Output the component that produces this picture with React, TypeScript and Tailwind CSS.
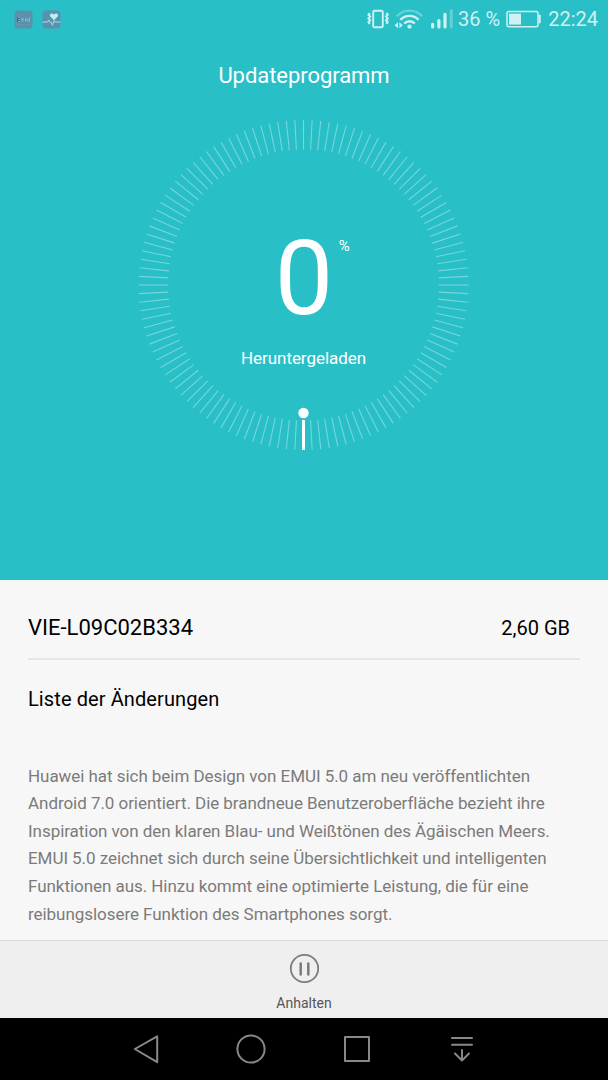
import type { ReactNode } from "react";

const TICKS = Array.from({ length: 120 }, (_, i) => i * 3);

function StatusBar() {
  return (
    <header className="flex h-[38px] items-center justify-between pl-[14px] pr-[10px] text-[#d0f1f3]">
      <div className="flex items-center gap-[9px]">
        <svg width="19" height="19" viewBox="0 0 19 19">
          <rect x="0.5" y="0.5" width="18" height="18" rx="3.5" fill="#5b91ad" />
          <rect x="3" y="7" width="3" height="5" fill="#3d6a84" />
          <path d="M4 7.5h2M4 9.5h2M4 11.5h2M7.5 8l1 3.5 1-3.5M11.5 11.5v-3l2.5 3v-3M15.5 7.5v4" stroke="#94bfd1" strokeWidth="0.8" fill="none" />
          <path d="M3 14.5h13" stroke="#7ba8bf" strokeWidth="0.8" strokeDasharray="1 2" />
        </svg>
        <svg width="19" height="19" viewBox="0 0 19 19">
          <rect x="0.5" y="0.5" width="18" height="18" rx="3.5" fill="#5b91ad" />
          <path d="M12 10.2 8.6 6.8C6.6 4.5 9.8 1.9 12 4.4c2.2-2.5 5.4.1 3.4 2.4z" fill="#b9f0f3" />
          <path d="M0.5 12h5l1.2-2 1.3 2.3 1.2 0 1.2 3 1.7-4.8 1 1.5h5.4" stroke="#a9dde4" strokeWidth="1" fill="none" />
        </svg>
      </div>
      <div className="flex items-center">
        <svg width="86" height="22" viewBox="0 0 86 22" fill="none" stroke="currentColor">
          <rect x="6.2" y="2.7" width="9.6" height="16.6" rx="1.4" strokeWidth="1.9" />
          <path d="M2.7 5l-1.2 1.8 1.6 1.8-1.6 1.8 1.6 1.8-1.6 1.8 1.2 1.8M19.3 5l1.4 1.8-1.6 1.8 1.6 1.8-1.6 1.8 1.6 1.8-1.4 1.8" strokeWidth="2.1" />
          <path d="M29.8 8.3a17 17 0 0 1 25.4 0" strokeWidth="2.2" opacity="0.4" />
          <path d="M33.4 11.9a12.3 12.3 0 0 1 18.2 0M37.3 15.5a7 7 0 0 1 10.4 0" strokeWidth="2.4" />
          <circle cx="42.5" cy="18.6" r="2.1" fill="currentColor" stroke="none" />
          <path d="M27.6 17.2l3.4-3v6zM35.8 17.2l-3.4-3v6z" fill="currentColor" stroke="none" />
          <path d="M65.6 18.9v-2.6M71.9 18.9v-6.4M78 18.9V6.3" strokeWidth="3.2" strokeLinecap="round" />
          <path d="M84.3 18.9V2.6" strokeWidth="3" strokeLinecap="round" opacity="0.35" />
        </svg>
        <span className="ml-[5px] text-[20px] leading-none">36 %</span>
        <svg className="ml-[6px]" width="36" height="18" viewBox="0 0 36 18" fill="none" stroke="currentColor">
          <rect x="1" y="1.4" width="31" height="15.4" rx="2" strokeWidth="1.5" />
          <rect x="3" y="3.6" width="12" height="11" fill="currentColor" stroke="none" />
          <path d="M33 5h1.4v8H33z" fill="currentColor" strokeWidth="0.6" />
        </svg>
        <time className="ml-[6px] text-[20px] leading-none">22:24</time>
      </div>
    </header>
  );
}

function ProgressDial() {
  return (
    <div className="relative mt-[30px] flex h-[332px] w-full flex-col items-center">
      <svg className="absolute left-0 top-0" width="608" height="332" viewBox="0 0 608 332">
        <g transform="translate(303.5 166)">
          {TICKS.filter((angle) => angle !== 180).map((angle) => (
            <line key={angle} y1="-165" y2="-135.5" stroke="#fff" strokeOpacity="0.36" strokeWidth="1.1" transform={`rotate(${angle})`} />
          ))}
          <line y1="135" y2="165" stroke="#fff" strokeWidth="3" />
          <circle cy="128" r="5.2" fill="#fff" />
        </g>
      </svg>
      <div className="relative mt-[107px] text-[104px] leading-[105px]">
        0
        <span className="absolute left-[64px] top-[11px] text-[15px] leading-[18px]">%</span>
      </div>
      <p className="mt-[16px] pr-px text-[17px] leading-[22px] tracking-[-0.05px]">Heruntergeladen</p>
    </div>
  );
}

function NavIcon({ children }: { children: ReactNode }) {
  return (
    <svg width="32" height="32" viewBox="0 0 32 32" fill="none" stroke="#888" strokeWidth="2" strokeLinejoin="round" strokeLinecap="round">
      {children}
    </svg>
  );
}

export default function App() {
  return (
    <div className="flex h-[1080px] w-[608px] flex-col overflow-hidden bg-[#f7f7f7] font-['Roboto',sans-serif]">
      <section className="h-[580px] shrink-0 bg-[#29bfc7] text-white">
        <StatusBar />
        <h1 className="mt-[24px] -mb-px text-center text-[22px] leading-[28px] tracking-[-0.05px]">Updateprogramm</h1>
        <ProgressDial />
      </section>
      <main className="h-[360px] shrink-0 overflow-hidden pl-[28px] pr-[28px]">
        <div className="flex h-[80px] w-[552px] items-center justify-between border-b-2 border-[#e6e6e6] pr-[10px] pt-[17px] text-[20px] text-black">
          <span className="text-[22px]">VIE-L09C02B334</span>
          <span>2,60 GB</span>
        </div>
        <h2 className="mt-[25px] text-[20px] leading-[28px] tracking-[0.1px] text-black">Liste der Änderungen</h2>
        <p className="mt-[49.6px] whitespace-nowrap text-[17px] leading-[27.6px] tracking-[-0.05px] text-[#7b7b7b]">
          Huawei hat sich beim Design von EMUI 5.0 am neu veröffentlichten<br />
          Android 7.0 orientiert. Die brandneue Benutzeroberfläche bezieht ihre<br />
          Inspiration von den klaren Blau- und Weißtönen des Ägäischen Meers.<br />
          EMUI 5.0 zeichnet sich durch seine Übersichtlichkeit und intelligenten<br />
          Funktionen aus. Hinzu kommt eine optimierte Leistung, die für eine<br />
          reibungslosere Funktion des Smartphones sorgt.
        </p>
      </main>
      <button className="flex h-[78px] w-full shrink-0 flex-col items-center border-t border-[#dcdcdc] bg-[#efefef] pt-[12px]">
        <svg width="31" height="31" viewBox="0 0 31 31" fill="none" stroke="#7b7b7b">
          <circle cx="15.5" cy="15.5" r="13.7" strokeWidth="1.8" />
          <path d="M11.7 10.5v11M19.3 10.5v11" strokeWidth="2.5" strokeLinecap="round" />
        </svg>
        <span className="mt-[10px] text-[14px] leading-[18px] text-[#555]">Anhalten</span>
      </button>
      <nav className="flex h-[62px] shrink-0 items-center justify-between bg-black pl-[130px] pr-[130px]">
        <NavIcon><path d="M27.2 3.4v25.8L4.8 16z" /></NavIcon>
        <NavIcon><circle cx="16" cy="16" r="13.6" /></NavIcon>
        <NavIcon><rect x="4" y="4" width="24" height="24" /></NavIcon>
        <NavIcon><path d="M6 5h20M6 11.7h20M16 17v10.4M9 20.5l7 7 7-7" /></NavIcon>
      </nav>
    </div>
  );
}
